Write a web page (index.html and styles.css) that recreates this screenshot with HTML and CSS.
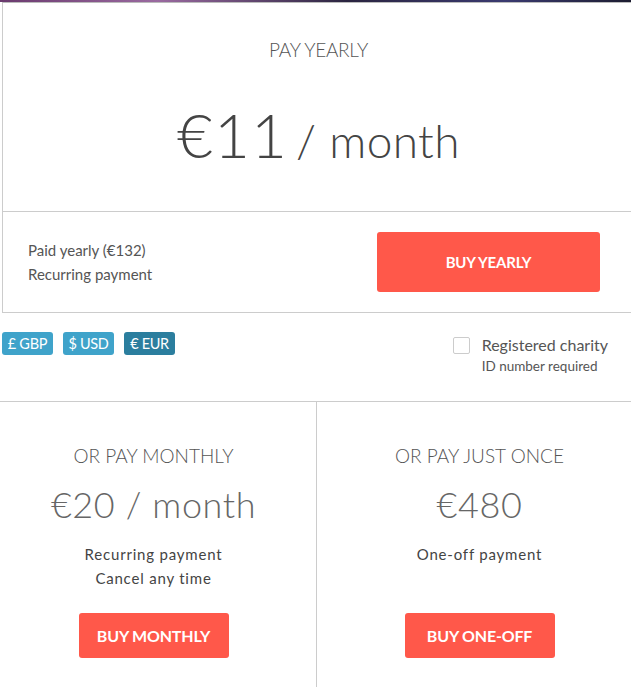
FILE: index.html
```html
<!DOCTYPE html>
<html>
<head>
	<meta charset="UTF-8">
	<title>Pricing</title>
	<link rel="stylesheet" href="styles.css">
</head>
<body>
<div class="CLS_Backdrop"></div>

<div id="ID_Yearly" class="CLS_Card">
	<div class="CLS_CardHead">
		<h2 class="CLS_Label CLS_LabelTop">PAY YEARLY</h2>
		<div class="CLS_BigPrice">€11<span class="CLS_Per">/ month</span></div>
	</div>
	<div class="CLS_CardFoot">
		<div class="CLS_Notes">
			<p>Paid yearly (€132)</p>
			<p>Recurring payment</p>
		</div>
		<a class="CLS_Buy CLS_BuyBig" href="#yearly">BUY YEARLY</a>
	</div>
</div>

<div id="ID_Options">
	<div class="CLS_Currencies">
		<a class="CLS_Pill" href="#gbp">£ GBP</a>
		<a class="CLS_Pill" href="#usd">$ USD</a>
		<a class="CLS_Pill CLS_Active" href="#eur">€ EUR</a>
	</div>
	<div class="CLS_Charity">
		<label><input type="checkbox" id="ID_ChkCharity"><span class="CLS_Box"></span>
		<span>Registered charity</span></label>
		<div class="CLS_Hint">ID number required</div>
	</div>
</div>

<div id="ID_Others">
	<div class="CLS_Col CLS_ColLeft">
		<h2 class="CLS_Label">OR PAY MONTHLY</h2>
		<div class="CLS_Price">€20 / month</div>
		<div class="CLS_ColNotes">
			<p>Recurring payment</p>
			<p>Cancel any time</p>
		</div>
		<a class="CLS_Buy" href="#monthly">BUY MONTHLY</a>
	</div>
	<div class="CLS_Col CLS_ColRight">
		<h2 class="CLS_Label">OR PAY JUST ONCE</h2>
		<div class="CLS_Price">€480</div>
		<div class="CLS_ColNotes">
			<p>One-off payment</p>
		</div>
		<a class="CLS_Buy" href="#once">BUY ONE-OFF</a>
	</div>
</div>

</body>
</html>
```

FILE: styles.css
```css
html, body {
	overflow: hidden;
}

body {
	margin: 0;
	background: #FFFFFF;
	font-family: Lato, "Open Sans", Arial, sans-serif;
	color: #555555;
}

p {
	margin: 0;
}

.CLS_Backdrop {
	height: 2px;
	background: linear-gradient(90deg, #6a3a6e 0%, #9a6aa0 25%, #2a2440 55%, #3a3a70 80%, #1c1c30 100%);
}

.CLS_Card {
	margin: 0 -4px 0 2px;
	border: 1px solid #CCCCCC;
	border-top-color: #BBBBBB;
	background: #FFFFFF;
}

.CLS_CardHead {
	padding: 36px 0 46px;
	text-align: center;
	border-bottom: 1px solid #CCCCCC;
}

.CLS_Label {
	margin: 0;
	font-size: 19px;
	line-height: 22px;
	font-weight: 300;
	color: #555555;
}

.CLS_LabelTop {
	letter-spacing: -0.3px;
}

.CLS_BigPrice {
	margin-top: 42px;
	font-size: 62px;
	line-height: 62px;
	font-weight: 300;
	color: #444444;
	letter-spacing: 1px;
}

.CLS_Per {
	margin-left: 8px;
	font-size: 46px;
	line-height: 1;
	letter-spacing: 0.4px;
}

.CLS_CardFoot {
	display: flex;
	align-items: center;
	justify-content: space-between;
	height: 100px;
	padding: 0 34px 0 25px;
}

.CLS_Notes {
	font-size: 15px;
	line-height: 24px;
	color: #555555;
}

.CLS_Buy {
	display: inline-flex;
	align-items: center;
	justify-content: center;
	width: 150px;
	height: 45px;
	border-radius: 3px;
	background: #FF584A;
	color: #FFFFFF;
	font-size: 16px;
	font-weight: 700;
	text-decoration: none;
	letter-spacing: -0.2px;
}

.CLS_BuyBig {
	width: 223px;
	height: 60px;
	font-size: 15px;
}

#ID_Options {
	display: flex;
	justify-content: space-between;
	align-items: flex-start;
	padding: 19px 23px 0 2px;
}

.CLS_Currencies {
	display: flex;
	gap: 10px;
}

.CLS_Pill {
	display: block;
	width: 51px;
	height: 23px;
	line-height: 23px;
	border-radius: 3px;
	background: #3FA3CA;
	color: #FFFFFF;
	font-size: 14.5px;
	text-align: center;
	text-decoration: none;
	letter-spacing: -0.3px;
}

.CLS_Pill.CLS_Active {
	background: #2B7E9E;
}

.CLS_Charity {
	margin-top: 3px;
	font-size: 16px;
	color: #555555;
}

.CLS_Charity label {
	display: flex;
	align-items: center;
	line-height: 20px;
	cursor: pointer;
}

.CLS_Charity input {
	display: none;
}

.CLS_Box {
	width: 15px;
	height: 15px;
	margin-right: 12px;
	border: 1px solid #CCCCCC;
	border-radius: 2px;
}

.CLS_Hint {
	margin: 2px 0 0 29px;
	font-size: 13.5px;
	line-height: 18px;
	color: #555555;
}

#ID_Others {
	display: grid;
	grid-template-columns: 317px 1fr;
	margin-top: 26px;
	border-top: 1px solid #CCCCCC;
	height: 300px;
}

.CLS_Col {
	display: flex;
	flex-direction: column;
	align-items: center;
	padding-top: 43px;
	text-align: center;
}

.CLS_ColLeft {
	padding-right: 9px;
	border-right: 1px solid #CCCCCC;
}

.CLS_ColRight {
	padding-left: 11px;
}

.CLS_Price {
	margin-top: 17px;
	font-size: 36px;
	line-height: 40px;
	font-weight: 300;
	color: #666666;
	letter-spacing: 0.6px;
}

.CLS_ColNotes {
	min-height: 48px;
	margin: 18px 0 23px;
	font-size: 15px;
	line-height: 24px;
	letter-spacing: 0.8px;
	color: #444444;
}
```
